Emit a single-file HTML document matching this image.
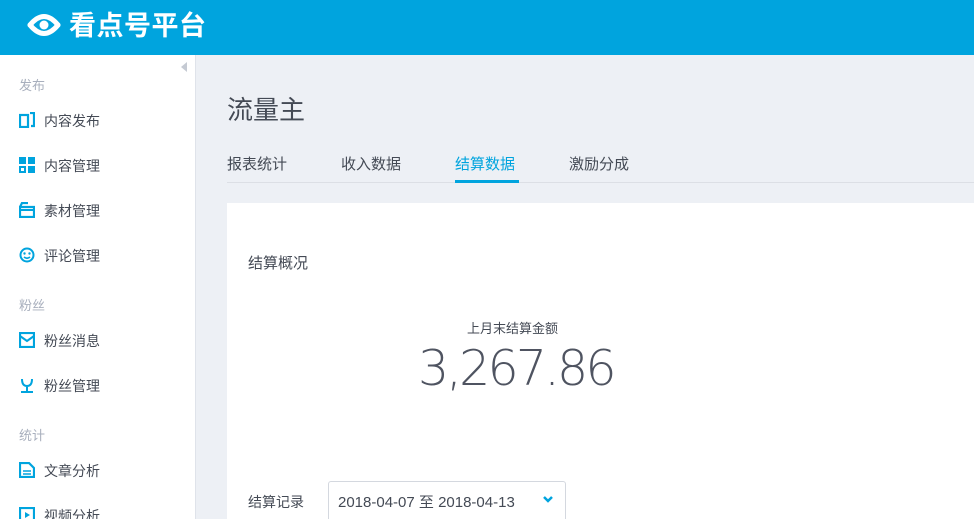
<!DOCTYPE html>
<html><head><meta charset="utf-8"><style>
*{margin:0;padding:0;box-sizing:border-box}
html,body{width:974px;height:519px;overflow:hidden}
body{background:#edf0f5;font-family:"Liberation Sans","Noto Sans CJK SC",sans-serif;position:relative}
.hd{position:absolute;left:0;top:0;width:974px;height:55px;background:#00a4de}
.logo{position:absolute;left:69px;top:8px;color:#fff;font-size:27px;font-weight:bold;line-height:36px;letter-spacing:0.5px}
.sb{position:absolute;left:0;top:55px;width:196px;height:464px;background:#fff;border-right:1px solid #dfe3ea}
.sec{position:absolute;left:19px;font-size:13px;color:#a8afbd}
.it{position:absolute;left:44px;font-size:14px;color:#444a55}
.ic{position:absolute;left:19px;width:16px;height:16px}
.t{position:absolute;font-size:15px;color:#444a55}
</style></head><body>
<div class="hd">
<svg style="position:absolute;left:27px;top:10px" width="34" height="30" viewBox="0 0 34 30"><path d="M3 15 Q17 -2 31 15" stroke="#fff" stroke-width="5" fill="none" stroke-linecap="round"/><path d="M3 15 Q17 32 31 15" stroke="#fff" stroke-width="5" fill="none" stroke-linecap="round"/><circle cx="17" cy="15" r="4.5" fill="#fff"/></svg>
<div class="logo">看点号平台</div></div>
<div class="sb">
<div style="position:absolute;left:181px;top:7px;width:0;height:0;border-top:5px solid transparent;border-bottom:5px solid transparent;border-right:6px solid #c5cad3"></div>
</div>
<div class="sec" style="top:75px">发布</div>
<svg class="ic" style="top:112px" viewBox="0 0 16 16"><rect x="1" y="3" width="8" height="12" stroke="#00a4de" stroke-width="2.2" fill="none"/><path d="M11 1h4v13h-3" stroke="#00a4de" stroke-width="2.2" fill="none"/></svg>
<div class="it" style="top:111px">内容发布</div>
<svg class="ic" style="top:157px" viewBox="0 0 16 16"><rect x="0" y="0" width="7" height="7" fill="#00a4de"/><rect x="9" y="0" width="7" height="7" fill="#00a4de"/><rect x="0" y="9" width="7" height="7" fill="#00a4de"/><rect x="9" y="9" width="7" height="7" fill="#00a4de"/><rect x="2" y="11" width="3" height="3" fill="#fff"/></svg>
<div class="it" style="top:156px">内容管理</div>
<svg class="ic" style="top:202px" viewBox="0 0 16 16"><path d="M1 5h14v10H1z M1 5L3 1h6" stroke="#00a4de" stroke-width="2.2" fill="none"/><path d="M1 8h14" stroke="#00a4de" stroke-width="2"/></svg>
<div class="it" style="top:201px">素材管理</div>
<svg class="ic" style="top:247px" viewBox="0 0 16 16"><circle cx="8" cy="8" r="6.5" stroke="#00a4de" stroke-width="2" fill="none"/><circle cx="5.5" cy="6.5" r="1.2" fill="#00a4de"/><circle cx="10.5" cy="6.5" r="1.2" fill="#00a4de"/><path d="M5 10q3 2.5 6 0" stroke="#00a4de" stroke-width="1.6" fill="none"/></svg>
<div class="it" style="top:246px">评论管理</div>
<div class="sec" style="top:295px">粉丝</div>
<svg class="ic" style="top:332px" viewBox="0 0 16 16"><rect x="1" y="1" width="14" height="14" stroke="#00a4de" stroke-width="2.2" fill="none"/><path d="M1 4l7 5 7-5" stroke="#00a4de" stroke-width="2" fill="none"/></svg>
<div class="it" style="top:331px">粉丝消息</div>
<svg class="ic" style="top:377px" viewBox="0 0 16 16"><path d="M3 2q0 7 5 7t5-7 M8 9v5 M2 15h12" stroke="#00a4de" stroke-width="2" fill="none"/></svg>
<div class="it" style="top:376px">粉丝管理</div>
<div class="sec" style="top:425px">统计</div>
<svg class="ic" style="top:462px" viewBox="0 0 16 16"><path d="M1 1h9l5 5v9H1z" stroke="#00a4de" stroke-width="2.2" fill="none"/><path d="M4 9h8M4 12h8" stroke="#00a4de" stroke-width="1.6"/></svg>
<div class="it" style="top:461px">文章分析</div>
<svg class="ic" style="top:507px" viewBox="0 0 16 16"><rect x="1" y="1" width="14" height="14" stroke="#00a4de" stroke-width="2.2" fill="none"/><path d="M6 5l5 3-5 3z" fill="#00a4de"/></svg>
<div class="it" style="top:506px">视频分析</div>

<div style="position:absolute;left:227px;top:90px;font-size:26px;color:#444a55">流量主</div>
<div class="t" style="left:227px;top:153px">报表统计</div>
<div class="t" style="left:341px;top:153px">收入数据</div>
<div class="t" style="left:455px;top:153px;color:#00a4de">结算数据</div>
<div class="t" style="left:569px;top:153px">激励分成</div>
<div style="position:absolute;left:227px;top:182px;width:747px;height:1px;background:#dcdfe5"></div>
<div style="position:absolute;left:455px;top:180px;width:64px;height:3px;background:#00a4de"></div>
<div style="position:absolute;left:227px;top:203px;width:747px;height:316px;background:#fff"></div>
<div style="position:absolute;left:248px;top:252px;font-size:15px;color:#444a55">结算概况</div>
<div style="position:absolute;left:467px;top:318px;font-size:13px;color:#444a55">上月末结算金额</div>
<div style="position:absolute;left:418px;top:340px;font-size:49px;color:#4f5461;font-family:'DejaVu Sans ExtraLight','DejaVu Sans',sans-serif;font-weight:200;letter-spacing:-2.8px">3,267.86</div>
<div style="position:absolute;left:248px;top:492px;font-size:14px;color:#444a55">结算记录</div>
<div style="position:absolute;left:328px;top:481px;width:238px;height:45px;border:1px solid #d4d8df;border-radius:3px;background:#fff"></div>
<div style="position:absolute;left:338px;top:491px;font-size:15px;color:#444a55">2018-04-07 至 2018-04-13</div>
<svg style="position:absolute;left:542px;top:495px" width="12" height="9" viewBox="0 0 12 9"><path d="M2 2l4 4 4-4" stroke="#00a4de" stroke-width="2.5" fill="none"/></svg>
</body></html>
